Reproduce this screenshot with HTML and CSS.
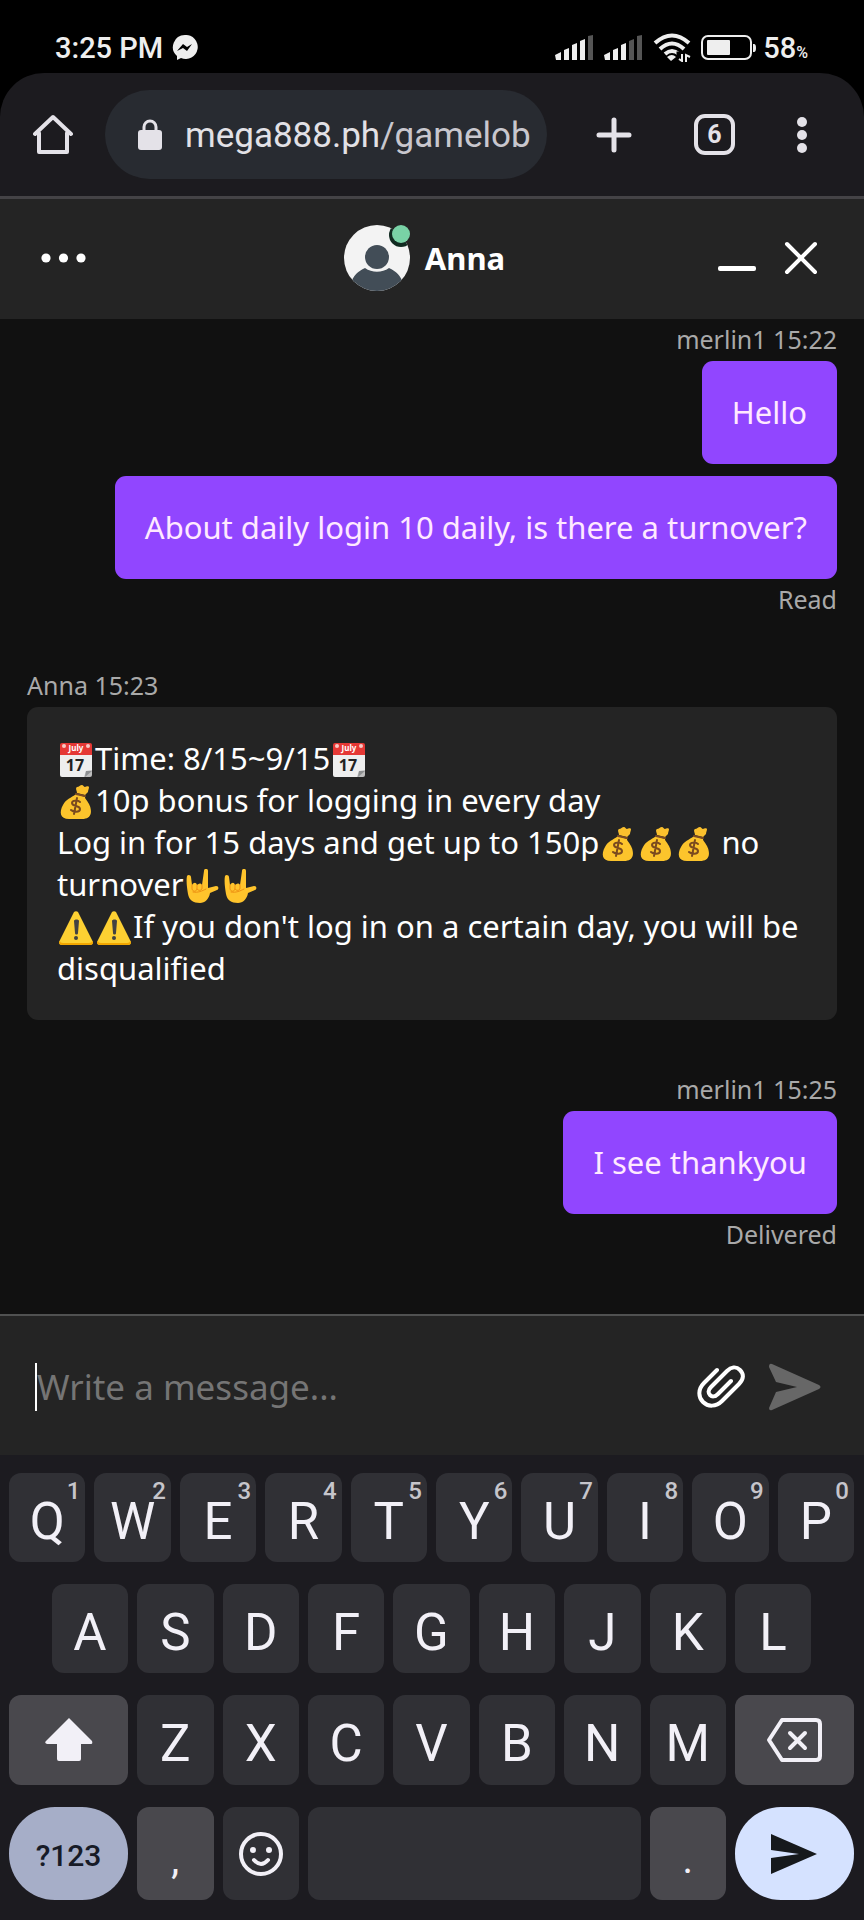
FILE: index.html
```html
<!DOCTYPE html>
<html lang="en">
<head>
<meta charset="utf-8">
<meta name="viewport" content="width=device-width, initial-scale=1">
<title>Chat with Anna</title>
<link rel="stylesheet" href="styles.css">
</head>
<body>
<svg class="sprites" aria-hidden="true">
  <symbol id="calendar" viewBox="0 0 34 34">
    <path fill="#eeeeee" d="M1 9h32v20l-5 5H3a2 2 0 0 1-2-2z"/>
    <path fill="#bdbdbd" d="M33 27v5a2 2 0 0 1-2 2h-6l2-6z"/>
    <path fill="#8d8f91" d="M33 28l-7 6 1-6z"/>
    <path fill="#e53835" d="M3 0h28a2 2 0 0 1 2 2v10H1V2a2 2 0 0 1 2-2z"/>
    <circle cx="5" cy="3" r="2" fill="#f7c9c6"/>
    <circle cx="29" cy="3" r="2" fill="#f7c9c6"/>
    <text x="17" y="8" class="cal-month">July</text>
    <text x="16" y="28" class="cal-day">17</text>
  </symbol>
  <symbol id="bag" viewBox="0 0 34 34">
    <path fill="#fbc02d" d="M18 2c2 0 3-2 5-2 1 0 2 2 3 2 1-1 4-1 4 0 0 2-1 3-1 5l-3 3-8-2c0-2-2-5 0-6z"/>
    <path fill="#fcc42c" d="M17 9l9 3c0 2 2 3 4 7 3 6 4 15-7 15H10C1 34 0 27 4 20c3-6 8-7 13-11z"/>
    <path fill="none" stroke="#7b4b24" stroke-width="2" stroke-linecap="round" d="M17 9l9 2"/>
    <path fill="none" stroke="#7a4a1f" stroke-width="2" stroke-linecap="round" d="M21 17c-2-2-8-2-8 1 0 4 8 2 8 6 0 4-7 3-9 1M18 13l-3 16"/>
  </symbol>
  <symbol id="horns" viewBox="0 0 34 34">
    <path fill="#ffc42c" d="M2 7c1-2 4-1 4 1l1 8c2-3 4-3 5 0 2-2 4-2 5 0l2-14c0-3 4-3 4 0v17l8-2c3 0 3 3 1 4l-7 3c-1 6-5 10-10 10C8 34 4 31 3 25 2 19 1 12 2 7z"/>
    <path fill="none" stroke="#ed8f12" stroke-width="1" stroke-linecap="round" d="M7 16v4c1 3 4 3 5 0v-4M12 20c1 2 5 2 5-1v-3M8 23c5 1 9-1 13-3"/>
  </symbol>
  <symbol id="warning" viewBox="0 0 34 34">
    <path fill="#fdd032" d="M15 1c1-1 3-1 4 0l15 30c0 2-1 3-3 3H3c-2 0-3-1-3-3z"/>
    <path fill="#f2a600" d="M0 31c0 2 1 3 3 3h28c2 0 3-1 3-3l-1-1c0 1-1 2-3 2H4c-2 0-3-1-3-2z"/>
    <path fill="#424242" d="M15 10c0-2 5-2 5 0l-1 12c0 2-3 2-3 0z"/>
    <circle cx="17" cy="27" r="2" fill="#424242"/>
  </symbol>
</svg>

<header class="status">
  <time>3:25 PM</time>
  <svg class="messenger" viewBox="0 0 26 26" width="26" height="26" aria-label="Messenger">
    <path fill="#eee" d="M13 0a12 12 0 1 1-4 23l-4 2v-4A12 12 0 0 1 13 0z"/>
    <path fill="#000" d="M5 16l6-7 4 3 5-3-5 7-4-3z"/>
  </svg>
  <span class="status-right">
    <svg viewBox="0 0 39 25" width="39" height="25" aria-label="Signal 1">
      <path fill="#eee" d="M0 20l6-3v8H1zM9 15l5-2v12H9zM17 10l5-2v17h-5zM25 6l5-2v21h-5z"/>
      <path fill="#555" d="M33 1l5-1v25h-5z"/>
    </svg>
    <svg viewBox="0 0 39 25" width="39" height="25" aria-label="Signal 2">
      <path fill="#eee" d="M0 20l6-3v8H1zM9 15l5-2v12H9zM17 10l5-2v17h-5z"/>
      <path fill="#555" d="M25 6l5-2v21h-5zM33 1l5-1v25h-5z"/>
    </svg>
    <svg viewBox="0 0 38 29" width="38" height="29" aria-label="Wi-Fi">
      <g fill="none" stroke="#eee" stroke-width="4">
        <path d="M2 10q17-15 34 0M7 16q12-11 24 0M12 21q7-6 14 0"/>
      </g>
      <path fill="#eee" d="M14 24q5-4 9 0l-5 4z"/>
      <path fill="none" stroke="#000" stroke-width="5" d="M26 28v-7h10"/>
      <path fill="none" stroke="#eee" stroke-width="2" d="M29 21v7l-3-2M33 29v-7l4 2"/>
    </svg>
    <svg class="battery" viewBox="0 0 56 25" width="56" height="25" aria-label="Battery">
      <rect x="1" y="1" width="49" height="23" rx="6" fill="none" stroke="#eee" stroke-width="2"/>
      <rect x="6" y="5" width="23" height="15" rx="1" fill="#eee"/>
      <path fill="#eee" d="M52 9h1q2 0 2 4t-2 4h-1z"/>
    </svg>
    <span class="percent">58<small>%</small></span>
  </span>
</header>

<div class="browser">
<nav class="toolbar" aria-label="Browser">
  <button type="button" aria-label="Home">
    <svg viewBox="0 0 40 41" width="40" height="41" fill="none" stroke="#e4e2e8" stroke-width="4" stroke-linejoin="round" stroke-linecap="round"><path d="M2 20L20 3l18 17M6 19v19h28V19"/></svg>
  </button>
  <a class="address" href="#">
    <svg viewBox="0 0 26 32" width="26" height="32"><path d="M7 13V8a6 6 0 0 1 12 0v5" fill="none" stroke="#e4e2e8" stroke-width="3"/><rect x="1" y="11" width="24" height="20" rx="3" fill="#e4e2e8"/></svg>
    <span class="url">mega888.ph<span class="path">/gamelobby</span></span>
  </a>
  <div class="tools">
    <button type="button" aria-label="New tab">
      <svg viewBox="0 0 36 36" width="36" height="36" stroke="#e4e2e8" stroke-width="5" stroke-linecap="round"><path d="M18 3v30M3 18h30"/></svg>
    </button>
    <button type="button" class="tabs" aria-label="6 open tabs">6</button>
    <button type="button" aria-label="Browser menu">
      <svg viewBox="0 0 10 36" width="10" height="36" fill="#e4e2e8"><circle cx="5" cy="5" r="5"/><circle cx="5" cy="18" r="5"/><circle cx="5" cy="31" r="5"/></svg>
    </button>
  </div>
</nav>
</div>

<section class="chat-head">
  <button type="button" aria-label="Options">
    <svg viewBox="0 0 45 10" width="45" height="10" fill="#fff"><circle cx="5" cy="5" r="4.6"/><circle cx="22.5" cy="5" r="4.6"/><circle cx="40" cy="5" r="4.6"/></svg>
  </button>
  <div class="agent">
    <svg viewBox="0 0 66 66" width="66" height="66" aria-hidden="true">
      <defs><clipPath id="face"><circle cx="33" cy="33" r="33"/></clipPath></defs>
      <g clip-path="url(#face)">
        <rect width="66" height="66" fill="#f3f3f3"/>
        <path fill="#424d57" d="M7 58c2-7 7-12 14-15 7 5 17 5 24 0 7 3 12 8 14 15v10H7z"/>
        <circle cx="33" cy="32" r="12" fill="#424d57"/>
        <circle cx="57" cy="10" r="12" fill="#102a20"/>
      </g>
      <circle cx="57" cy="9" r="9" fill="#79d2a6"/>
    </svg>
    <h1>Anna</h1>
  </div>
  <div class="window-buttons">
    <button type="button" aria-label="Minimize">
      <svg viewBox="0 0 38 34" width="38" height="34" fill="#fff"><rect y="25" width="38" height="5" rx="2"/></svg>
    </button>
    <button type="button" aria-label="Close">
      <svg viewBox="0 0 34 34" width="34" height="34" stroke="#fff" stroke-width="4" stroke-linecap="round"><path d="M3 3l28 28M31 3L3 31"/></svg>
    </button>
  </div>
</section>

<main class="chat">
  <section class="group mine">
    <p class="meta">merlin1 15:22</p>
    <p class="bubble">Hello</p>
    <p class="bubble">About daily login 10 daily, is there a turnover?</p>
    <p class="meta receipt">Read</p>
  </section>
  <section class="group">
    <p class="meta">Anna 15:23</p>
    <p class="bubble"><svg class="emoji" role="img" aria-label="calendar"><use href="#calendar"/></svg>Time: 8/15~9/15<svg class="emoji" role="img" aria-label="calendar"><use href="#calendar"/></svg><br><svg class="emoji" role="img" aria-label="money bag"><use href="#bag"/></svg>10p bonus for logging in every day<br>Log in for 15 days and get up to 150p<svg class="emoji" role="img" aria-label="money bag"><use href="#bag"/></svg><svg class="emoji" role="img" aria-label="money bag"><use href="#bag"/></svg><svg class="emoji" role="img" aria-label="money bag"><use href="#bag"/></svg> no turnover<svg class="emoji" role="img" aria-label="love-you gesture"><use href="#horns"/></svg><svg class="emoji" role="img" aria-label="love-you gesture"><use href="#horns"/></svg><br><svg class="emoji" role="img" aria-label="warning"><use href="#warning"/></svg><svg class="emoji" role="img" aria-label="warning"><use href="#warning"/></svg>If you don't log in on a certain day, you will be disqualified</p>
  </section>
  <section class="group mine">
    <p class="meta">merlin1 15:25</p>
    <p class="bubble">I see thankyou</p>
    <p class="meta receipt">Delivered</p>
  </section>
</main>

<form class="composer">
  <input type="text" placeholder="Write a message..." aria-label="Write a message">
  <button type="button" aria-label="Attach file">
    <svg viewBox="0 0 48 44" width="48" height="44" fill="none" stroke="#fff" stroke-width="4" stroke-linecap="round" stroke-linejoin="round"><path d="M20 5L7 18C1 24 1 32 6 37s13 5 19-1L42 19c5-5 5-10 1-14s-9-3-13 1L14 22c-3 3-3 6-1 8s5 2 8-1l13-13"/></svg>
  </button>
  <button type="button" aria-label="Send message">
    <svg viewBox="0 0 52 48" width="52" height="48" fill="#676767"><path d="M3 1l47 21q3 2 0 4L3 47q-3 1-3-2l7-16 21-5L7 19 0 4q0-4 3-3z"/></svg>
  </button>
</form>

<section class="keyboard" aria-label="Keyboard">
  <button type="button" class="key">Q<sup>1</sup></button>
  <button type="button" class="key">W<sup>2</sup></button>
  <button type="button" class="key">E<sup>3</sup></button>
  <button type="button" class="key">R<sup>4</sup></button>
  <button type="button" class="key">T<sup>5</sup></button>
  <button type="button" class="key">Y<sup>6</sup></button>
  <button type="button" class="key">U<sup>7</sup></button>
  <button type="button" class="key">I<sup>8</sup></button>
  <button type="button" class="key">O<sup>9</sup></button>
  <button type="button" class="key">P<sup>0</sup></button>
  <button type="button" class="key indent">A</button>
  <button type="button" class="key">S</button>
  <button type="button" class="key">D</button>
  <button type="button" class="key">F</button>
  <button type="button" class="key">G</button>
  <button type="button" class="key">H</button>
  <button type="button" class="key">J</button>
  <button type="button" class="key">K</button>
  <button type="button" class="key">L</button>
  <button type="button" class="key wide alt icon" aria-label="Shift">
    <svg viewBox="0 0 48 44" width="48" height="44" fill="#f2f0f7"><path d="M24 0l23 23q1 3-1 3H36v15q0 2-2 2H14q-2 0-2-2V26H2q-3-1-1-3z"/></svg>
  </button>
  <button type="button" class="key">Z</button>
  <button type="button" class="key">X</button>
  <button type="button" class="key">C</button>
  <button type="button" class="key">V</button>
  <button type="button" class="key">B</button>
  <button type="button" class="key">N</button>
  <button type="button" class="key">M</button>
  <button type="button" class="key wide alt icon" aria-label="Backspace">
    <svg viewBox="0 0 56 44" width="56" height="44" fill="none" stroke="#f2f0f7" stroke-width="4" stroke-linejoin="round" stroke-linecap="round"><path d="M16 2h34q4 0 4 4v32q0 4-4 4H16L3 22zM24 15l15 15M39 15L24 30"/></svg>
  </button>
  <button type="button" class="key wide pill symbols">?123</button>
  <button type="button" class="key alt mark">,</button>
  <button type="button" class="key icon" aria-label="Emoji">
    <svg viewBox="0 0 44 44" width="44" height="44" fill="none" stroke="#f2f0f7" stroke-width="4" stroke-linecap="round"><circle cx="22" cy="22" r="20"/><path d="M15 28q7 8 14 0"/><g fill="#f2f0f7" stroke="none"><circle cx="14" cy="18" r="3"/><circle cx="30" cy="18" r="3"/></g></svg>
  </button>
  <button type="button" class="key space" aria-label="Space"></button>
  <button type="button" class="key alt mark">.</button>
  <button type="button" class="key wide pill send icon" aria-label="Send">
    <svg viewBox="0 0 46 40" width="46" height="40" fill="#16191c"><path d="M0 0l46 20L0 40V24l28-4L0 16z"/></svg>
  </button>
</section>
</body>
</html>
```
FILE: styles.css
```css
* { box-sizing: border-box; }

body {
  margin: 0;
  min-height: 100vh;
  display: flex;
  flex-direction: column;
  background: #000;
  color: #fff;
  font-family: "Noto Sans", sans-serif;
}

p, h1 { margin: 0; }
svg { flex: none; }

button {
  display: flex;
  align-items: center;
  justify-content: center;
  padding: 0;
  border: 0;
  background: none;
  color: inherit;
  font: inherit;
}

.sprites { display: none; }

.cal-month {
  font: bold 8px "Noto Sans", sans-serif;
  fill: #fff;
  text-anchor: middle;
}

.cal-day {
  font: bold 16px "Noto Sans", sans-serif;
  fill: #222;
  text-anchor: middle;
}

/* Phone status bar */
.status {
  display: flex;
  align-items: center;
  gap: 9px;
  height: 73px;
  padding: 22px 56px 0 55px;
  color: #eee;
  font: 500 29px/36px Roboto, sans-serif;
}

.status-right {
  display: flex;
  align-items: center;
  gap: 10px;
  margin-left: auto;
}

.percent { margin-left: -4px; }

.status small {
  font-size: 16px;
  line-height: 16px;
}

/* Browser toolbar */
.toolbar {
  display: flex;
  align-items: center;
  height: 123px;
  padding: 0 57px 0 33px;
  border-radius: 44px 44px 0 0;
  background: #1c1b1f;
}

.browser { border-bottom: 3px solid #444346; }

.address {
  flex: 1;
  min-width: 0;
  display: flex;
  align-items: center;
  gap: 22px;
  height: 89px;
  margin: 0 49px 0 32px;
  padding: 0 17px 0 32px;
  border-radius: 45px;
  background: #282b31;
  color: #e2e1e6;
  font: 35px/44px Roboto, sans-serif;
  text-decoration: none;
}

.url {
  flex: 1;
  min-width: 0;
  padding-top: 2px;
  overflow: hidden;
  white-space: nowrap;
}

.path { color: #c8c7ce; }

.tools {
  display: flex;
  align-items: center;
  gap: 62px;
}

.tabs {
  width: 41px;
  height: 41px;
  border: 4px solid #e4e2e8;
  border-radius: 11px;
  color: #e4e2e8;
  font: bold 25px/32px Roboto, sans-serif;
}

/* Chat header */
.chat-head {
  display: grid;
  grid-template-columns: 1fr auto 1fr;
  align-items: center;
  height: 120px;
  padding: 0 46px 2px 31px;
  background: #242424;
}

.chat-head > button {
  justify-self: start;
  padding: 10px;
}

.agent {
  display: flex;
  align-items: center;
  gap: 15px;
}

.agent svg { overflow: visible; }
.agent h1 { font-size: 31px; line-height: 42px; }

.window-buttons {
  display: flex;
  justify-content: flex-end;
  gap: 28px;
}

/* Conversation */
.chat {
  flex: 1;
  display: flex;
  flex-direction: column;
  gap: 52px;
  padding: 3px 27px 0;
  background: #111;
}

.group {
  display: flex;
  flex-direction: column;
  align-items: flex-start;
}

.mine { align-items: flex-end; }

.meta {
  margin-bottom: 5px;
  color: #a9a9a9;
  font-size: 25px;
  line-height: 34px;
}

.receipt { margin: 3px 0 0; }

.bubble {
  padding: 30px 30px 31px;
  border-radius: 11px;
  background: #242424;
  font-size: 31px;
  line-height: 42px;
}

.bubble + .bubble { margin-top: 12px; }

.mine .bubble {
  background: #9146ff;
  color: #ffe9ff;
}

.emoji {
  width: 34px;
  height: 34px;
  margin: 0 2px;
  vertical-align: -7px;
}

/* Message field */
.composer {
  display: flex;
  align-items: center;
  gap: 24px;
  height: 141px;
  padding: 2px 43px 0 35px;
  border-top: 2px solid #505151;
  background: #242424;
}

.composer input {
  flex: 1;
  min-width: 0;
  height: 48px;
  padding: 0;
  border: 0;
  border-left: 2px solid #fff;
  outline: 0;
  background: none;
  color: #fff;
  font: 35px/48px "Noto Sans", sans-serif;
}

.composer input::placeholder { color: #757575; opacity: 1; }

/* On-screen keyboard */
.keyboard {
  display: grid;
  grid-template-columns: repeat(20, minmax(0, 1fr));
  grid-template-rows: 89px 89px 90px 93px;
  gap: 22px 9px;
  padding: 18px 10px 20px 9px;
  background: #1c1b20;
}

.key {
  position: relative;
  grid-column: span 2;
  padding-top: 8px;
  border-radius: 12px;
  background: #303035;
  color: #f2f0f7;
  font: 51px/60px Roboto, sans-serif;
}

.key sup {
  position: absolute;
  top: 6px;
  right: 5px;
  color: #c6c5cb;
  font-size: 24px;
  font-weight: 500;
  line-height: 24px;
}

.indent { grid-column: 2 / span 2; }
.wide { grid-column: span 3; }
.space { grid-column: span 8; }
.alt { background: #49484d; }
.icon { padding-top: 0; }
.pill { border-radius: 46px; }
.mark { align-items: flex-end; padding-bottom: 10px; font-size: 40px; }

.symbols {
  background: #a6aec8;
  color: #171b27;
  font-size: 30px;
  font-weight: 500;
  padding-top: 4px;
}

.send { background: #d5e2ff; }
```
